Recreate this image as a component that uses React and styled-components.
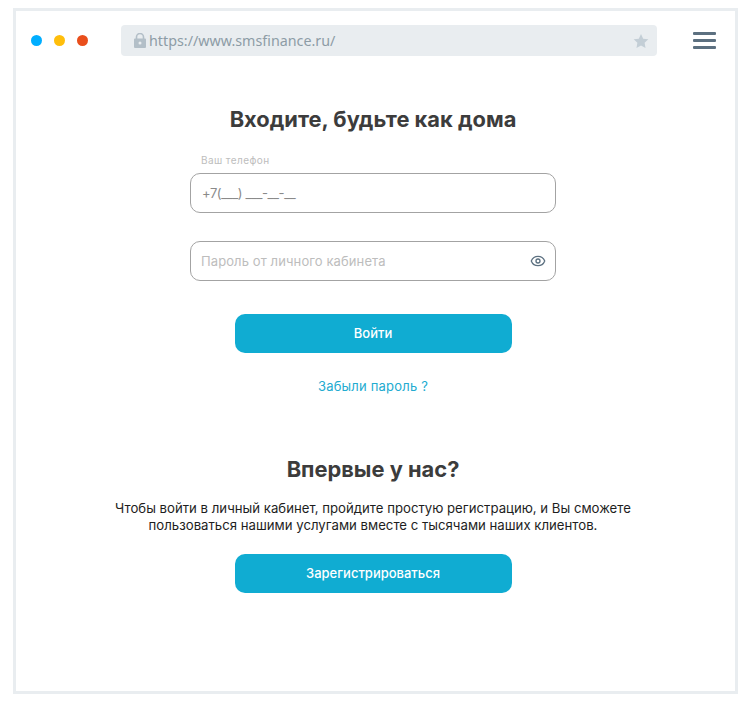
import React from 'react';
import styled, { createGlobalStyle } from 'styled-components';
import { Eye } from 'lucide-react';

const GlobalStyle = createGlobalStyle`
  html, body {
    margin: 0;
    padding: 0;
    background: #fff;
  }
  body {
    font-family: 'Inter', 'Liberation Sans', sans-serif;
  }
`;

const Page = styled.div`
  width: 751px;
  height: 709px;
  padding: 8px 13px;
  box-sizing: border-box;
`;

const BrowserFrame = styled.div`
  width: 725px;
  height: 686px;
  box-sizing: border-box;
  border: 3px solid #e9edf0;
  display: flex;
  flex-direction: column;
`;

const Toolbar = styled.div`
  display: flex;
  align-items: center;
  padding: 14px 19px 0 15px;
`;

const Dots = styled.div`
  display: flex;
  gap: 12px;
  width: 90px;
  flex: none;
`;

const Dot = styled.span`
  width: 11px;
  height: 11px;
  border-radius: 50%;
  background: ${props => props.color};
`;

const AddressBar = styled.div`
  width: 536px;
  height: 31px;
  flex: none;
  box-sizing: border-box;
  padding: 0 8px 0 13px;
  background: #e9edf0;
  border-radius: 4px;
  display: flex;
  align-items: center;
  gap: 3px;
`;

const Url = styled.span`
  flex: 1;
  font-family: 'Noto Sans', 'Open Sans', sans-serif;
  font-size: 14.3px;
  color: #8d9ca6;
`;

const MenuButton = styled.div`
  margin-left: 36px;
  width: 23px;
  flex: none;
  display: flex;
  flex-direction: column;
  gap: 4px;
`;

const MenuLine = styled.span`
  height: 3px;
  background: #5c7080;
  border-radius: 1px;
`;

const Content = styled.main`
  display: flex;
  flex-direction: column;
  align-items: center;
  padding-right: 5px;
`;

const Title = styled.h1`
  margin: 48px 0 0;
  font-size: 21.85px;
  line-height: 30px;
  font-weight: 700;
  color: #3c3c3c;
`;

const SubTitle = styled.h2`
  margin: 58px 0 0;
  font-size: 21.85px;
  line-height: 30px;
  font-weight: 700;
  color: #3c3c3c;
`;

const Form = styled.form`
  width: 366px;
  display: flex;
  flex-direction: column;
`;

const FieldLabel = styled.label`
  margin: 19px 0 0 11px;
  height: 14px;
  font-size: 10px;
  line-height: 14px;
  color: #bdbdbd;
  letter-spacing: 0.42px;
`;

const Field = styled.div`
  position: relative;
  margin-top: ${props => props.$gap}px;
`;

const Input = styled.input`
  display: block;
  width: 100%;
  height: 40px;
  box-sizing: border-box;
  padding: 0 36px 0 ${props => props.$pad}px;
  border: 1px solid #a3a3a3;
  border-radius: 10px;
  background: #fff;
  font-family: inherit;
  font-size: 13px;
  letter-spacing: ${props => props.$spacing}px;
  outline: none;

  &::placeholder {
    color: ${props => props.$hint};
    opacity: 1;
  }
`;

const EyeButton = styled.span`
  position: absolute;
  right: 10px;
  top: 12px;
  display: flex;
  color: #5c7080;
`;

const Button = styled.button`
  width: 277px;
  height: 39px;
  margin-top: ${props => props.$gap}px;
  padding: 0 0 1px;
  border: 0;
  border-radius: 10px;
  background: #10acd2;
  color: #fff;
  font-family: inherit;
  font-size: 13px;
  font-weight: 500;
`;

const ForgotLink = styled.a`
  margin-top: 24px;
  font-size: 13px;
  line-height: 19px;
  color: #22abd0;
  letter-spacing: 0.2px;
  text-decoration: none;
`;

const Lead = styled.p`
  margin: 16px 0 0;
  width: 560px;
  text-align: center;
  font-size: 13.2px;
  line-height: 17px;
  color: #1e1e1e;
`;

const StarIcon = () => (
  <svg width="16" height="16" viewBox="0 0 24 24" fill="#c3ced6">
    <path d="M12 1.5l3.3 7 7.7 1-5.6 5.3 1.4 7.7-6.8-3.8-6.8 3.8 1.4-7.7L1 9.5l7.700-1z" />
  </svg>
);

const LockIcon = () => (
  <svg width="12" height="15" viewBox="0 0 12 15" fill="#b3bfc8">
    <path d="M0 6.5A1 1 0 0 1 1 5.500h10a1 1 0 0 1 1 1V14a1 1 0 0 1-1 1H1a1 1 0 0 1-1-1z" />
    <path d="M2.500 6V4a3.500 3.500 0 0 1 7 0v2" fill="none" stroke="#b3bfc8" strokeWidth="1.600" />
    <circle cx="6" cy="10" r="1.500" fill="#e9edf0" />
  </svg>
);

export default function App() {
  return (
    <Page>
      <GlobalStyle />
      <BrowserFrame>
        <Toolbar>
          <Dots>
            <Dot color="#00aeff" />
            <Dot color="#ffbe0b" />
            <Dot color="#e94e1b" />
          </Dots>
          <AddressBar>
            <LockIcon />
            <Url>https://www.smsfinance.ru/</Url>
            <StarIcon />
          </AddressBar>
          <MenuButton>
            <MenuLine />
            <MenuLine />
            <MenuLine />
          </MenuButton>
        </Toolbar>
        <Content>
          <Title>Входите, будьте как дома</Title>
          <Form>
            <FieldLabel>Ваш телефон</FieldLabel>
            <Field $gap={6}>
              <Input $pad={11} $spacing={-0.4} $hint="#8a8a8a" placeholder="+7(___) ___-__-__" />
            </Field>
            <Field $gap={28}>
              <Input $pad={10} $spacing={0.1} $hint="#bdbdbd" placeholder="Пароль от личного кабинета" />
              <EyeButton><Eye size={16} strokeWidth={2} /></EyeButton>
            </Field>
          </Form>
          <Button $gap={33}>Войти</Button>
          <ForgotLink href="#forgot">Забыли пароль ?</ForgotLink>
          <SubTitle>Впервые у нас?</SubTitle>
          <Lead>
            Чтобы войти в личный кабинет, пройдите простую регистрацию, и Вы сможете
            пользоваться нашими услугами вместе с тысячами наших клиентов.
          </Lead>
          <Button $gap={20}>Зарегистрироваться</Button>
        </Content>
      </BrowserFrame>
    </Page>
  );
}
